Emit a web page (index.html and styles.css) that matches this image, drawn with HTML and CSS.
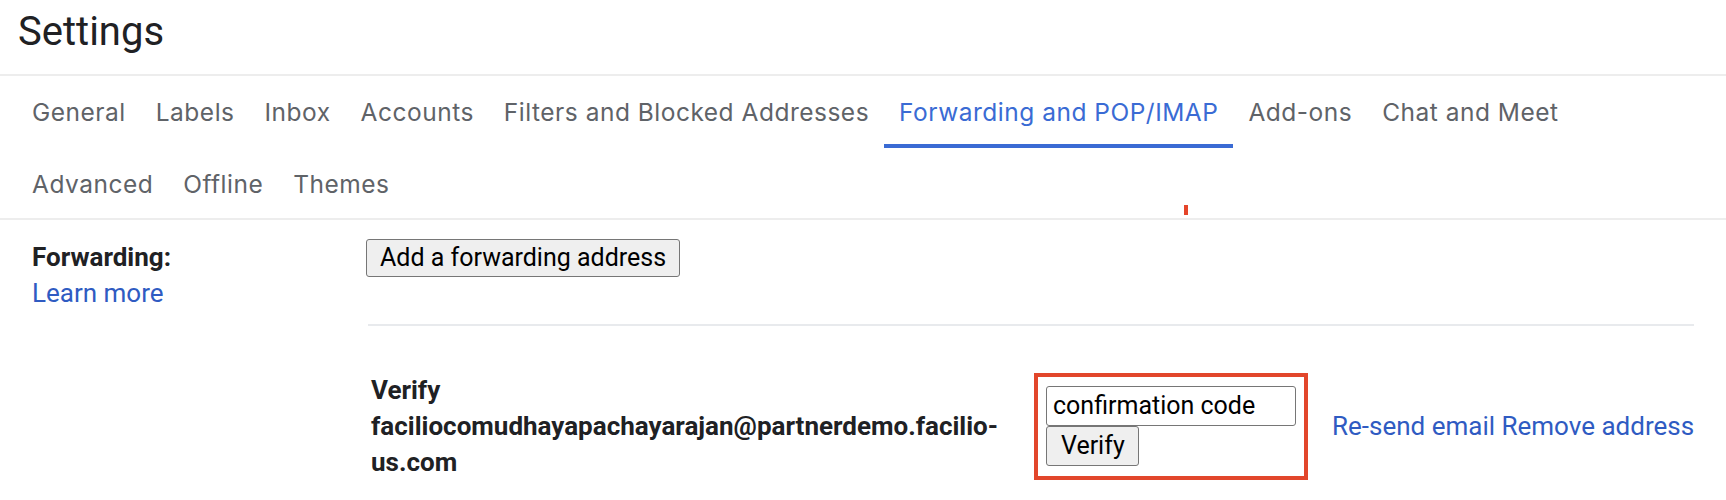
FILE: index.html
```html
<!DOCTYPE html>
<html lang="en">
<head>
<meta charset="utf-8">
<title>Settings</title>
<link rel="stylesheet" href="styles.css">
</head>
<body>
<div class="page">
  <header class="title-bar">
    <h1 class="title">Settings</h1>
  </header>
  <nav class="tabs">
    <a class="tab">General</a>
    <a class="tab">Labels</a>
    <a class="tab">Inbox</a>
    <a class="tab">Accounts</a>
    <a class="tab">Filters and Blocked Addresses</a>
    <a class="tab tab-active">Forwarding and POP/IMAP</a>
    <a class="tab">Add-ons</a>
    <a class="tab">Chat and Meet</a>
    <a class="tab">Advanced</a>
    <a class="tab">Offline</a>
    <a class="tab">Themes</a>
  </nav>
  <span class="red-tick"></span>
  <section class="settings">
    <div class="label-col">
      <div class="label">Forwarding:</div>
      <a class="link">Learn more</a>
    </div>
    <div class="content-col">
      <div class="add-row">
        <button class="btn">Add a forwarding address</button>
      </div>
      <div class="verify-row">
        <div class="verify-text">Verify faciliocomudhayapachayarajan@partnerdemo.facilio-us.com</div>
        <div class="highlight">
          <input class="code-input" type="text" value="confirmation code">
          <button class="btn btn-verify">Verify</button>
        </div>
        <div class="actions">
          <a class="link">Re-send email</a> <a class="link">Remove address</a>
        </div>
      </div>
    </div>
  </section>
</div>
</body>
</html>
```

FILE: styles.css
```css
html, body {
  margin: 0;
  padding: 0;
  background: #ffffff;
}

body {
  font-family: Roboto, "Liberation Sans", Arial, sans-serif;
  color: #202124;
  width: 1726px;
  height: 500px;
  overflow: hidden;
}

.page {
  position: relative;
}

.title-bar {
  height: 76px;
  border-bottom: 2px solid #ededed;
  box-sizing: border-box;
  padding-left: 18px;
}

.title {
  margin: 0;
  font-family: Roboto, "Liberation Sans", sans-serif;
  font-weight: 400;
  font-size: 40px;
  line-height: 64px;
  color: #202124;
}

.tabs {
  display: flex;
  flex-wrap: wrap;
  padding: 0 100px 0 17px;
  border-bottom: 2px solid #ededed;
  height: 144px;
  box-sizing: border-box;
  align-content: flex-start;
}

.tab {
  display: block;
  padding: 0 15px;
  height: 72px;
  line-height: 72px;
  font-family: Inter, Roboto, sans-serif;
  font-size: 24.5px;
  letter-spacing: 0.5px;
  color: #5f6368;
  white-space: nowrap;
}

.tab-active {
  color: #3a6bd4;
  box-shadow: inset 0 -4px 0 #3a6bd4;
}

.red-tick {
  position: absolute;
  left: 1184px;
  top: 205px;
  width: 4px;
  height: 10px;
  background: #e5452a;
}

.settings {
  display: flex;
  padding: 19px 34px 0 32px;
}

.label-col {
  width: 334px;
  flex: none;
  font-size: 26px;
  line-height: 36px;
}

.label {
  font-weight: 700;
}

.link {
  color: #2f5bc2;
  text-decoration: none;
  cursor: pointer;
}

.content-col {
  flex: 1;
  font-size: 26px;
  line-height: 36px;
}

.add-row {
  padding-bottom: 47px;
  border-bottom: 2px solid #e8eaed;
  margin-left: 2px;
}

.add-row .btn {
  margin-left: -2px;
}

.btn {
  display: block;
  font-family: Roboto, "Liberation Sans", sans-serif;
  font-size: 25px;
  line-height: 36px;
  height: 38px;
  padding: 0 13px;
  color: #000000;
  background: #efefef;
  border: 1px solid #767676;
  border-radius: 3px;
}

.verify-row {
  display: flex;
  align-items: center;
  padding-top: 46px;
}

.verify-text {
  width: 650px;
  box-sizing: border-box;
  flex: none;
  padding-left: 5px;
  font-weight: 700;
}

.highlight {
  flex: none;
  margin-left: 18px;
  border: 4px solid #e2462b;
  padding: 9px 8px 10px 8px;
}

.code-input {
  display: block;
  box-sizing: border-box;
  width: 250px;
  height: 40px;
  margin: 0;
  padding: 0 6px;
  font-family: Roboto, "Liberation Sans", sans-serif;
  font-size: 25px;
  color: #000000;
  border: 1px solid #767676;
  border-radius: 3px;
}

.btn-verify {
  box-sizing: border-box;
  width: 93px;
  height: 40px;
  padding: 0 14px;
}

.actions {
  margin-left: 24px;
  white-space: nowrap;
}
```
